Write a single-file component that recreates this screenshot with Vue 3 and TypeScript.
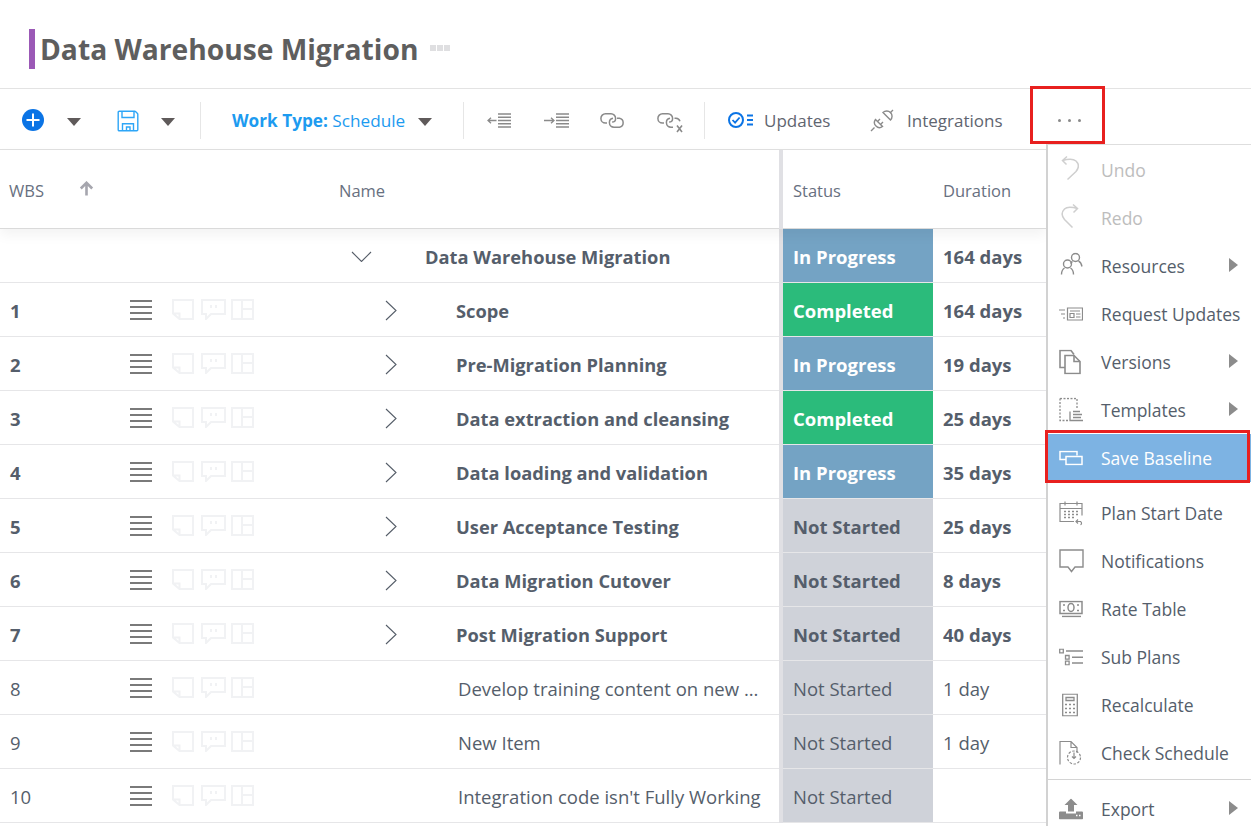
<script setup lang="ts">
type Row = {
  wbs: string
  name: string
  status: "progress" | "done" | "todo"
  duration: string
  level: number
  bold: boolean
}

const statusText = { progress: "In Progress", done: "Completed", todo: "Not Started" }

const rows: Row[] = [
  { wbs: "", name: "Data Warehouse Migration", status: "progress", duration: "164 days", level: 0, bold: true },
  { wbs: "1", name: "Scope", status: "done", duration: "164 days", level: 1, bold: true },
  { wbs: "2", name: "Pre-Migration Planning", status: "progress", duration: "19 days", level: 1, bold: true },
  { wbs: "3", name: "Data extraction and cleansing", status: "done", duration: "25 days", level: 1, bold: true },
  { wbs: "4", name: "Data loading and validation", status: "progress", duration: "35 days", level: 1, bold: true },
  { wbs: "5", name: "User Acceptance Testing", status: "todo", duration: "25 days", level: 1, bold: true },
  { wbs: "6", name: "Data Migration Cutover", status: "todo", duration: "8 days", level: 1, bold: true },
  { wbs: "7", name: "Post Migration Support", status: "todo", duration: "40 days", level: 1, bold: true },
  { wbs: "8", name: "Develop training content on new ...", status: "todo", duration: "1 day", level: 2, bold: false },
  { wbs: "9", name: "New Item", status: "todo", duration: "1 day", level: 2, bold: false },
  { wbs: "10", name: "Integration code isn't Fully Working", status: "todo", duration: "", level: 2, bold: false },
]
</script>

<template>
  <div class="page">
    <header class="title-bar">
      <span class="title-mark"></span>
      <h1>Data Warehouse Migration</h1>
      <span class="title-more"><i></i><i></i><i></i></span>
    </header>

    <div class="toolbar">
      <svg class="t-add" width="22" height="22" viewBox="0 0 22 22">
        <circle cx="11" cy="11" r="11" fill="#0b74e5" />
        <path d="M11 4.500v13M4.500 11h13" stroke="#fff" stroke-width="2" />
      </svg>
      <span class="caret t-caret1"></span>
      <svg class="t-save" width="22" height="22" viewBox="0 0 22 22" fill="none" stroke="#2ea6f7" stroke-width="1.400">
        <path d="M1.200 2.200a1 1 0 0 1 1-1h15.600a1 1 0 0 1 .7.300l2 2a1 1 0 0 1 .3.700v15.600a1 1 0 0 1-1 1H2.200a1 1 0 0 1-1-1z" />
        <path d="M5 1.200v6.300h12V1.200M5.500 20.800v-7h11v7M9.500 20.800v-3.800h3.500v3.800" />
      </svg>
      <span class="caret t-caret2"></span>
      <span class="t-sep t-sep1"></span>
      <span class="work-type"><b>Work Type:</b> Schedule</span>
      <span class="caret t-caret3"></span>
      <span class="t-sep t-sep2"></span>
      <svg class="t-out" width="24" height="15" viewBox="0 0 24 15" fill="none" stroke="#8a8a8a" stroke-width="1.500">
        <path d="M11 1h13M11 4.200h13M11 7.500h13M11 10.800h13M11 14h13" />
        <path d="M9.500 7.500H1M4 4.700 1 7.500l3 2.800" stroke-width="1.300" />
      </svg>
      <svg class="t-in" width="25" height="15" viewBox="0 0 25 15" fill="none" stroke="#8a8a8a" stroke-width="1.500">
        <path d="M12 1h13M12 4.200h13M12 7.500h13M12 10.800h13M12 14h13" />
        <path d="M0 7.500h9.500M7 4.700l3 2.800-3 2.800" stroke-width="1.300" />
      </svg>
      <svg class="t-link" width="25" height="15" viewBox="0 0 25 15" fill="none" stroke="#8a8a8a" stroke-width="1.500">
        <path d="M7 10H5.500A4.600 4.600 0 0 1 5.500.8H11a4.600 4.600 0 0 1 4.600 4.600c0 2.200-1.500 3.600-3.500 3.600" />
        <path d="M17 5.200h2.500a4.600 4.600 0 0 1 0 9H14a4.600 4.600 0 0 1-4.600-4.600c0-2.200 1.500-4 3.600-4.300" />
      </svg>
      <svg class="t-unlink" width="26" height="20" viewBox="0 0 26 20" fill="none" stroke="#8a8a8a" stroke-width="1.500">
        <path d="M7 10H5.500A4.600 4.600 0 0 1 5.500.8H11a4.600 4.600 0 0 1 4.600 4.600c0 2.200-1.500 3.600-3.500 3.600" />
        <path d="M17.500 5.200h1.500a4.600 4.600 0 0 1 4 3M16 14.200h-2a4.600 4.600 0 0 1-4.600-4.600c0-2.200 1.500-4 3.600-4.300" />
        <path d="m20 12.500 5 6.500M25 12.500 20 19" stroke-width="1.600" />
      </svg>
      <span class="t-sep t-sep3"></span>
      <svg class="t-upd" width="25" height="16" viewBox="0 0 25 16" fill="none" stroke="#0b74e5">
        <circle cx="8" cy="8" r="7" stroke-width="2" />
        <path d="m4.500 8 2.600 2.700 4.500-5.200" stroke-width="1.800" />
        <path d="M19 3.500h6M19 8h6M19 12.500h6" stroke-width="2" />
      </svg>
      <span class="t-label t-updates">Updates</span>
      <svg class="t-plug" width="24" height="23" viewBox="0 0 24 23" fill="none" stroke="#8a8a8a" stroke-width="1.400">
        <path d="M1 22l3.500-3.500M23 1l-3 3" />
        <path d="M5.500 10.500 12.500 17.500A5 5 0 0 1 5.500 10.500z" />
        <path d="M7.500 12.500 10 10M10.500 15.500 13 13" />
        <path d="M13 3.500 20.500 11A5.300 5.300 0 0 0 13 3.500z" />
      </svg>
      <span class="t-label t-integ">Integrations</span>
      <span class="t-dots"><i></i><i></i><i></i></span>
    </div>

    <div class="grid">
      <div class="head">
        <div class="head-wbs">WBS
          <svg width="15" height="15" viewBox="0 0 15 15" fill="none" stroke="#a6a6ae" stroke-width="2.600">
            <path d="M7.500 14.500V2M1.800 7.500 7.500 1.800l5.700 5.700" />
          </svg>
        </div>
        <div class="head-name">Name</div>
        <div class="c-div"></div>
        <div class="head-cell">Status</div>
        <div class="head-cell">Duration</div>
      </div>

      <div v-for="r in rows" :key="r.name" class="row" :class="{ bold: r.bold }">
        <div class="c-wbs">{{ r.wbs }}</div>
        <div class="c-tools">
          <template v-if="r.level > 0">
            <svg class="burger" width="22" height="20" viewBox="0 0 22 20" stroke="#4f4f4f" stroke-width="1.500">
              <path d="M0 1h22M0 7h22M0 13h22M0 19h22" />
            </svg>
            <svg class="faint note" width="22" height="21" viewBox="0 0 22 21" fill="none">
              <path d="M1 14.500V1h20v19H7.500zM1.500 14.500h6v5.500" />
            </svg>
            <svg class="faint chat" width="25" height="21" viewBox="0 0 25 21" fill="none">
              <path d="M1 1h23v14H10l-5 5v-5H1zM10 6v3M15 6v3" />
            </svg>
            <svg class="faint panes" width="23" height="21" viewBox="0 0 23 21" fill="none">
              <path d="M1 1h21v19H1zM11 1v19M11 10h11" />
            </svg>
          </template>
        </div>
        <div class="c-name" :class="'lvl' + r.level">
          <svg v-if="r.level === 0" class="chev-down" width="21" height="11" viewBox="0 0 21 11" fill="none" stroke="#555d68" stroke-width="1.100">
            <path d="m1 1 9.500 9.500L20 1" />
          </svg>
          <svg v-if="r.level === 1" class="chev-right" width="12" height="21" viewBox="0 0 12 21" fill="none" stroke="#555d68" stroke-width="1.100">
            <path d="m1 1 10 9.500L1 20" />
          </svg>
          <span>{{ r.name }}</span>
        </div>
        <div class="c-div"></div>
        <div class="c-status" :class="r.status">{{ statusText[r.status] }}</div>
        <div class="c-dur">{{ r.duration }}</div>
      </div>
    </div>

    <!-- overflow menu -->
    <aside class="menu">
      <div class="m-item off">
        <svg class="m-hist" width="18" height="25" viewBox="0 0 18 25" fill="none" stroke="#cfcfcf" stroke-width="1.500">
          <path d="M6 1 1.500 5l4 4M1.500 5C7 3.500 12 3 15 5.500c3.500 3.500 2.500 7.500 0 10.500l-8.500 8" />
        </svg>
        <span>Undo</span>
      </div>
      <div class="m-item off">
        <svg class="m-hist" width="18" height="25" viewBox="0 0 18 25" fill="none" stroke="#cfcfcf" stroke-width="1.500">
          <path d="M12 1l4.500 4-4 4M16.500 5C11 3.500 6 3 3.500 5.500 0 9 1 13 3.500 16l8 8" />
        </svg>
        <span>Redo</span>
      </div>
      <div class="m-item sub">
        <svg class="m-people" width="23" height="23" viewBox="0 0 23 23" fill="none" stroke="#8c8c8c" stroke-width="1.400">
          <circle cx="15.500" cy="5" r="4" />
          <path d="M12.500 9c-1 .5-1.500 1-2 2M18.500 8.500c2 1 3 3 3.500 5.500" />
          <circle cx="7.500" cy="11.500" r="4" />
          <path d="M1.500 22c0-3 1.500-5.500 3-6.500M13.500 22c0-3-1.500-5.500-3-6.500" />
        </svg>
        <span>Resources</span>
      </div>
      <div class="m-item">
        <svg width="24" height="14" viewBox="0 0 24 14" fill="none" stroke="#8c8c8c" stroke-width="1.200">
          <path d="M8.500 1H23.500V13H8.500zM11 4h10M0 3h6M2 7h4M4 11h2" />
          <path d="M11 6.500h4v4h-4zM17 7h4.500M17 10h4.500" />
        </svg>
        <span>Request Updates</span>
      </div>
      <div class="m-item sub">
        <svg width="22" height="25" viewBox="0 0 22 25" fill="none" stroke="#8c8c8c" stroke-width="1.600">
          <path d="M6 18H1V1h11l3 4" />
          <path d="M6 6h9l6 6v12H6z" fill="#fff" />
          <path d="M15 6v6h6" />
        </svg>
        <span>Versions</span>
      </div>
      <div class="m-item sub">
        <svg width="24" height="25" viewBox="0 0 24 25" fill="none" stroke="#8c8c8c" stroke-width="1.300">
          <path d="M1 1h17v11M1 1v22h8" stroke-dasharray="2 1.500" />
          <path d="M11 14v9h13M14 14h7M14 17h9M14 20h8" />
        </svg>
        <span>Templates</span>
      </div>
      <div class="m-item hot">
        <svg width="24" height="15" viewBox="0 0 24 15" fill="none" stroke="#fff" stroke-width="1.500">
          <path d="M7 9H1V1h17v4" />
          <path d="M7 6h16v8H7z" />
        </svg>
        <span>Save Baseline</span>
      </div>
      <div class="m-item">
        <svg width="25" height="25" viewBox="0 0 25 25" fill="none" stroke="#8c8c8c" stroke-width="1.200">
          <path d="M15 21H1V3h22v12M1 8h22M6 1v4M18 1v4" />
          <path d="M5 11h2M9 11h2M13 11h2M17 11h2M5 14h2M9 14h2M13 14h2M17 14h2M5 17h2M9 17h2M13 17h2" stroke-width="1.600" />
          <path d="M17 21h4.500a2 2 0 0 1 0 3.500M19 19l-2 2 2 2" />
        </svg>
        <span>Plan Start Date</span>
      </div>
      <div class="m-item">
        <svg width="25" height="24" viewBox="0 0 25 24" fill="none" stroke="#8c8c8c" stroke-width="1.400">
          <path d="M1 1h23v17h-8l-3.500 4.500L9 18H1z" />
        </svg>
        <span>Notifications</span>
      </div>
      <div class="m-item">
        <svg width="24" height="17" viewBox="0 0 24 17" fill="none" stroke="#8c8c8c" stroke-width="1.500">
          <path d="M1 1h22v12H1zM3 16h19" />
          <ellipse cx="12" cy="7" rx="3" ry="4" />
          <path d="M4 4.500h2M18 4.500h2M4 10h2M18 10h2" />
        </svg>
        <span>Rate Table</span>
      </div>
      <div class="m-item">
        <svg width="24" height="17" viewBox="0 0 24 17" fill="none" stroke="#8c8c8c" stroke-width="1.300">
          <path d="M.7.700h3.600v3.600H.7zM6.500 7h3.600v3.600H6.500zM6.500 12.700h3.600v3.600H6.500z" />
          <path d="M7 2.500h17M13 8.800h11M13 14.500h11" stroke-width="1.500" />
        </svg>
        <span>Sub Plans</span>
      </div>
      <div class="m-item">
        <svg class="m-calc" width="16" height="23" viewBox="0 0 16 23" fill="none" stroke="#8c8c8c" stroke-width="1.300">
          <path d="M.7.700h14.600v21.600H.7zM4 4h8v3H4z" />
          <path d="M3 11h2M7 11h2M11 11h2M3 15h2M7 15h2M11 15h2M3 19h2M7 19h2M11 19h2" stroke-width="1.500" />
        </svg>
        <span>Recalculate</span>
      </div>
      <div class="m-item">
        <svg width="24" height="25" viewBox="0 0 24 25" fill="none" stroke="#8c8c8c" stroke-width="1.200">
          <path d="M1 24V1h11l6 6v5M12 1v6h6" />
          <circle cx="15" cy="17" r="6.500" stroke-dasharray="2.500 1.500" />
          <path d="M15 12v6M13 16l2 2 2-2" />
        </svg>
        <span>Check Schedule</span>
      </div>
      <div class="m-rule"></div>
      <div class="m-item sub">
        <svg width="24" height="21" viewBox="0 0 24 21">
          <path d="M12 0l6.500 6.500H15V13H9V6.500H5.500z" fill="#8c8c8c" />
          <path d="M0 14a1 1 0 0 1 1-1h6v2h10v-2h6a1 1 0 0 1 1 1v6a1 1 0 0 1-1 1H1a1 1 0 0 1-1-1z" fill="#8c8c8c" />
          <path d="M17 17h1.500M20 17h1.500" stroke="#fff" stroke-width="1.500" />
        </svg>
        <span>Export</span>
      </div>
    </aside>

    <!-- red callouts drawn on top of the screenshot -->
    <div class="callout callout-dots"></div>
    <div class="callout callout-save"></div>
  </div>
</template>

<style>
body {
  margin: 0;
  background: #fff;
}
</style>

<style scoped>
.page {
  position: relative;
  width: 1251px;
  height: 826px;
  overflow: hidden;
  font-family: "Open Sans", "Noto Sans", sans-serif;
  color: #555e6b;
}

.title-bar {
  height: 89px;
  box-sizing: border-box;
  display: flex;
  align-items: center;
  padding: 9px 0 0 29px;
  border-bottom: 1px solid #e3e3e3;
}
.title-mark {
  width: 6px;
  height: 40px;
  background: #9b59b6;
  margin-right: 5px;
}
h1 {
  margin: 0;
  font-size: 28.200px;
  font-weight: 700;
  color: #5e5e5e;
  white-space: nowrap;
}
.title-more {
  display: flex;
  gap: 1px;
  margin: -2px 0 0 12px;
}
.title-more i {
  width: 6px;
  height: 6px;
  background: #dfdfe1;
}

.toolbar {
  height: 61px;
  box-sizing: border-box;
  display: flex;
  align-items: center;
  padding: 2px 0 0 22px;
  border-bottom: 1px solid #e0e0e0;
}
.caret {
  width: 0;
  height: 0;
  margin-top: 4px;
  border-left: 7.500px solid transparent;
  border-right: 7.500px solid transparent;
  border-top: 8px solid #5f5a5a;
}
.t-caret1 { margin-left: 23px; }
.t-save { margin: 2px 0 0 36px; }
.t-caret2 { margin-left: 22px; }
.t-sep {
  width: 1px;
  height: 37px;
  background: #e6e6e6;
}
.t-sep1 { margin-left: 25px; }
.work-type {
  margin-left: 31px;
  width: 186px;
  font-size: 17.200px;
  color: #1d9bf0;
  white-space: nowrap;
}
.work-type b { font-weight: 700; }
.t-sep2 { margin-left: 31px; }
.t-out { margin-left: 23px; }
.t-in { margin-left: 33px; }
.t-link { margin-left: 31px; }
.t-unlink { margin-left: 32px; margin-top: 5px; }
.t-sep3 { margin-left: 21px; }
.t-upd { margin-left: 23px; }
.t-label {
  font-size: 17px;
  color: #5f6570;
  white-space: nowrap;
}
.t-updates { margin-left: 11px; width: 66px; }
.t-plug { margin-left: 40px; }
.t-integ { margin-left: 13px; width: 95px; }
.t-dots {
  display: flex;
  gap: 7px;
  margin-left: 56px;
}
.t-dots i {
  width: 3px;
  height: 3px;
  border-radius: 50%;
  background: #8a8a8a;
}

.grid {
  width: 1047px;
  border-right: 1px solid #d2d2d2;
  box-sizing: border-box;
}
.head,
.row {
  display: grid;
  grid-template-columns: 130px 220px 429px 4px 150px 1fr;
  height: 54px;
  box-sizing: border-box;
  border-bottom: 1px solid #e6e6e8;
  align-items: center;
  font-size: 18.500px;
}
.head {
  grid-template-columns: 350px 429px 4px 150px 1fr;
  height: 79px;
  border-bottom-color: #dadada;
  box-shadow: 0 6px 12px rgba(0, 0, 0, 0.05);
  position: relative;
  font-size: 16.500px;
  color: #687080;
}
.head-wbs {
  display: flex;
  align-items: center;
  gap: 35px;
  padding: 3px 0 0 9px;
}
.head-wbs svg { margin-top: -4px; }
.head-name {
  margin-left: -11px;
  padding-top: 3px;
}
.head-cell { padding: 3px 0 0 10px; }
.c-div {
  align-self: stretch;
  background: #e0e0e4;
  margin-bottom: -1px;
}
.c-wbs {
  padding: 2px 0 0 10px;
}
.row.bold { font-weight: 700; }
.row.bold .c-name { font-size: 18.300px; }
.c-tools {
  display: flex;
  align-items: center;
}
.faint {
  stroke: #f1f2f4;
  stroke-width: 2;
}
.burger { margin-right: 20px; }
.chat { margin-left: 7px; }
.panes { margin-left: 5px; }
.c-name {
  display: flex;
  align-items: center;
  white-space: nowrap;
}
.c-name span { padding-top: 2px; }
.chev-right { margin-top: 2px; }
.chev-down { margin-top: 2px; }
.lvl0 { padding-left: 1px; }
.lvl0 span { margin-left: 53px; }
.lvl1 { padding-left: 35px; }
.lvl1 span { margin-left: 59px; }
.lvl2 { padding-left: 108px; }
.c-status {
  align-self: stretch;
  display: flex;
  align-items: center;
  padding: 2px 0 0 10px;
  box-sizing: border-box;
}
.progress { background: #74a3c4; color: #fff; }
.done { background: #2bbb7b; color: #fff; }
.todo { background: #cfd2d9; }
.c-dur { padding: 2px 0 0 10px; }

.menu {
  position: absolute;
  left: 1046px;
  top: 144px;
  width: 205px;
  height: 690px;
  box-sizing: border-box;
  padding-top: 1px;
  background: #fff;
  border-left: 2px solid #d2d2d2;
  border-top: 1px solid #dedede;
}
.m-item {
  position: relative;
  height: 48px;
  display: flex;
  align-items: center;
  padding-left: 53px;
  font-size: 17.500px;
  color: #555e6b;
  white-space: nowrap;
}
.m-item svg {
  position: absolute;
  left: 11px;
  top: 50%;
  transform: translateY(-50%);
}
.m-item .m-calc { left: 14px; }
.m-item .m-hist { left: 13px; margin-top: -2px; }
.m-item .m-people { left: 12px; margin-top: -2px; }
.m-item.off { color: #bdbdbd; }
.m-item.sub::after {
  content: "";
  position: absolute;
  right: 13px;
  top: 50%;
  margin-top: -8px;
  border-top: 7px solid transparent;
  border-bottom: 7px solid transparent;
  border-left: 9px solid #8c8c8c;
}
.m-item.hot {
  background: #7db3e3;
  color: #fff;
  margin-bottom: 7px;
}
.m-rule {
  height: 1px;
  background: #d4d4d4;
  margin: 2px 0 5px;
}

.callout {
  position: absolute;
  box-sizing: border-box;
  border: 3px solid #e8201f;
}
.callout-dots {
  left: 1030px;
  top: 86px;
  width: 75px;
  height: 58px;
}
.callout-save {
  left: 1045px;
  top: 430px;
  width: 205px;
  height: 53px;
}
</style>
